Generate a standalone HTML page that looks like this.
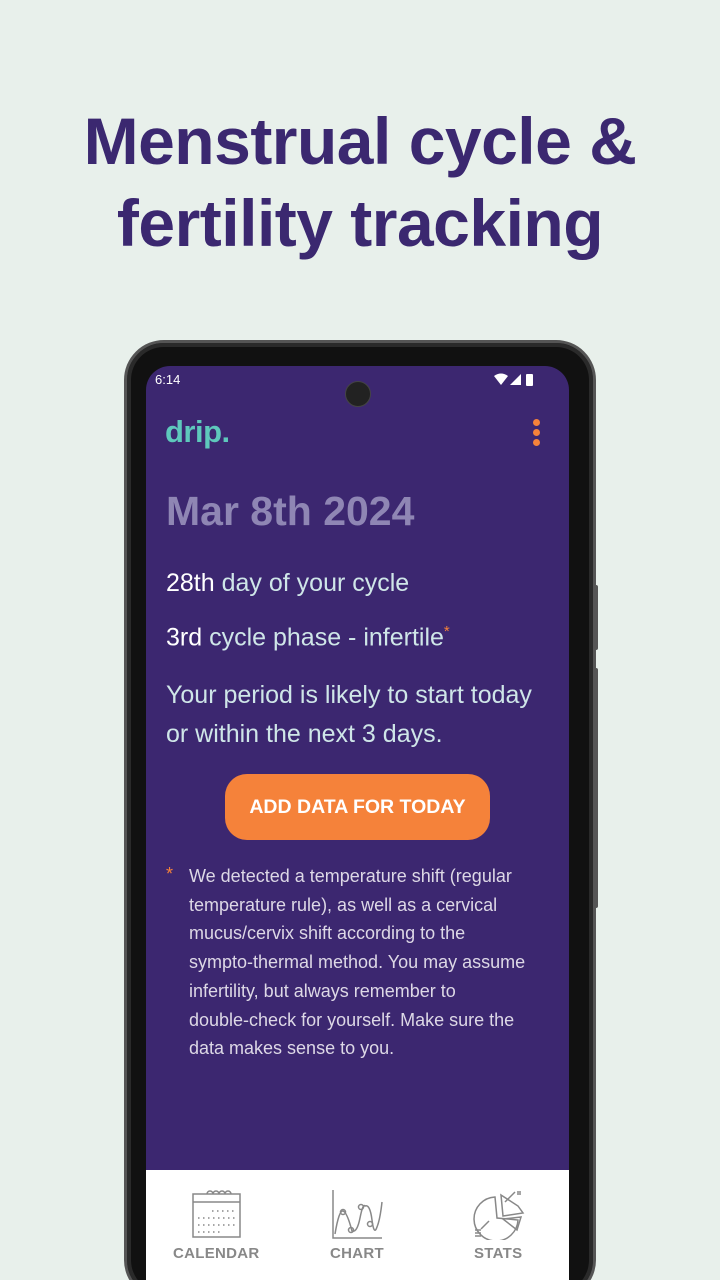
<!DOCTYPE html>
<html><head><meta charset="utf-8"><style>
*{margin:0;padding:0;box-sizing:border-box}
html,body{width:720px;height:1280px;overflow:hidden}
body{background:#e8f0eb;font-family:"Liberation Sans",sans-serif;position:relative}
.title{position:absolute;top:100px;left:0;width:720px;text-align:center;color:#3b2870;font-weight:bold;font-size:66px;line-height:82px;letter-spacing:-0.5px}
.frame{position:absolute;left:124px;top:340px;width:472px;height:960px;border-radius:40px;background:#111;border:3px solid #555;box-shadow:inset 0 0 0 4px #2a2a2a}
.btn1{position:absolute;left:592px;top:585px;width:6px;height:65px;background:#555;border-radius:2px}
.btn2{position:absolute;left:592px;top:668px;width:6px;height:240px;background:#555;border-radius:2px}
.screen{position:absolute;left:146px;top:366px;width:423px;height:914px;border-radius:24px 24px 0 0;background:#3c2770;overflow:hidden}
.abs{position:absolute}
.t{color:#cfe6e8;font-size:25px}
.w{color:#fff}
.nav{position:absolute;left:0;top:804px;width:423px;height:120px;background:#fff}
.lbl{position:absolute;top:75px;font-weight:bold;color:#888;font-size:15px;letter-spacing:0.3px}
</style></head><body>
<div class="title">Menstrual cycle &amp;<br>fertility tracking</div>
<div class="btn1"></div><div class="btn2"></div>
<div class="frame"></div>
<div class="screen">
 <div class="abs" style="left:9px;top:6px;color:#fff;font-size:13px">6:14</div>
 <svg class="abs" style="left:348px;top:7px" width="48" height="14" viewBox="0 0 48 14"><path d="M0 3Q7-2 14 3L7 12Z" fill="#fff"/><path d="M16 12L27 1V12Z" fill="#fff"/><rect x="32" y="1" width="7" height="12" rx="1" fill="#fff"/></svg>
 <div class="abs" style="left:199px;top:15px;width:26px;height:26px;border-radius:50%;background:#222;border:1px solid #444"></div>
 <div class="abs" style="left:19px;top:48px;color:#5ec8bc;font-size:31px;font-weight:bold;letter-spacing:-0.5px">drip.</div>
 <div class="abs" style="left:387px;top:53px;width:7px;height:7px;border-radius:50%;background:#f5823a;box-shadow:0 10px 0 #f5823a,0 20px 0 #f5823a"></div>
 <div class="abs" style="left:20px;top:122px;color:#8f86b4;font-size:41px;font-weight:bold">Mar 8th 2024</div>
 <div class="abs t" style="left:20px;top:203px"><span class="w">28th</span> day of your cycle</div>
 <div class="abs t" style="left:20px;top:257px"><span class="w">3rd</span> cycle phase - infertile<sup style="color:#f5823a;font-size:15px">*</sup></div>
 <div class="abs t" style="left:20px;top:310px;line-height:39px">Your period is likely to start today<br>or within the next 3 days.</div>
 <div class="abs" style="left:79px;top:408px;width:265px;height:66px;border-radius:22px;background:#f5823a;color:#fff;font-weight:bold;font-size:19.5px;text-align:center;line-height:66px">ADD DATA FOR TODAY</div>
 <div class="abs" style="left:20px;top:498px;color:#f5823a;font-size:18px">*</div>
 <div class="abs" style="left:43px;top:496px;color:#ddd8e6;font-size:18px;line-height:28.7px;white-space:nowrap">We detected a temperature shift (regular<br>temperature rule), as well as a cervical<br>mucus/cervix shift according to the<br>sympto-thermal method. You may assume<br>infertility, but always remember to<br>double-check for yourself. Make sure the<br>data makes sense to you.</div>
 <div class="nav">
  <svg class="abs" style="left:46px;top:20px" width="50" height="48" viewBox="0 0 50 48" fill="none" stroke="#888" stroke-width="1.5"><rect x="1" y="4" width="47" height="43"/><line x1="1" y1="12" x2="48" y2="12"/><path d="M15 4a3 3 0 0 1 6 0M21 4a3 3 0 0 1 6 0M27 4a3 3 0 0 1 6 0M33 4a3 3 0 0 1 6 0"/><g stroke-dasharray="1.5 3.5"><line x1="20" y1="21" x2="45" y2="21"/><line x1="6" y1="28" x2="45" y2="28"/><line x1="6" y1="35" x2="45" y2="35"/><line x1="6" y1="42" x2="30" y2="42"/></g></svg>
  <div class="lbl" style="left:27px">CALENDAR</div>
  <svg class="abs" style="left:186px;top:20px" width="52" height="50" viewBox="0 0 52 50" fill="none" stroke="#888" stroke-width="1.5"><path d="M1 0V48H50"/><path d="M3 44Q7 20 11 21T20 41Q25 43 28 28T33 16Q38 14 40 30T45 37Q48 30 50 12"/><circle cx="11" cy="22" r="2.5"/><circle cx="19" cy="40" r="2.5"/><circle cx="29" cy="17" r="2.5"/><circle cx="38" cy="34" r="2.5"/></svg>
  <div class="lbl" style="left:184px">CHART</div>
  <svg class="abs" style="left:327px;top:20px" width="52" height="50" viewBox="0 0 52 50" fill="none" stroke="#888" stroke-width="1.5"><path d="M22 7A22 22 0 1 0 45 30L24 28Z"/><path d="M28 5L45 16L50 23L30 26Z"/><path d="M30 29L48 27L44 40Z"/><path d="M42 2L32 12M48 2h-4M48 4h-4M8 39L16 31M2 40h6M2 43h6M2 46h6"/></svg>
  <div class="lbl" style="left:328px">STATS</div>
 </div>
</div>
</body></html>
